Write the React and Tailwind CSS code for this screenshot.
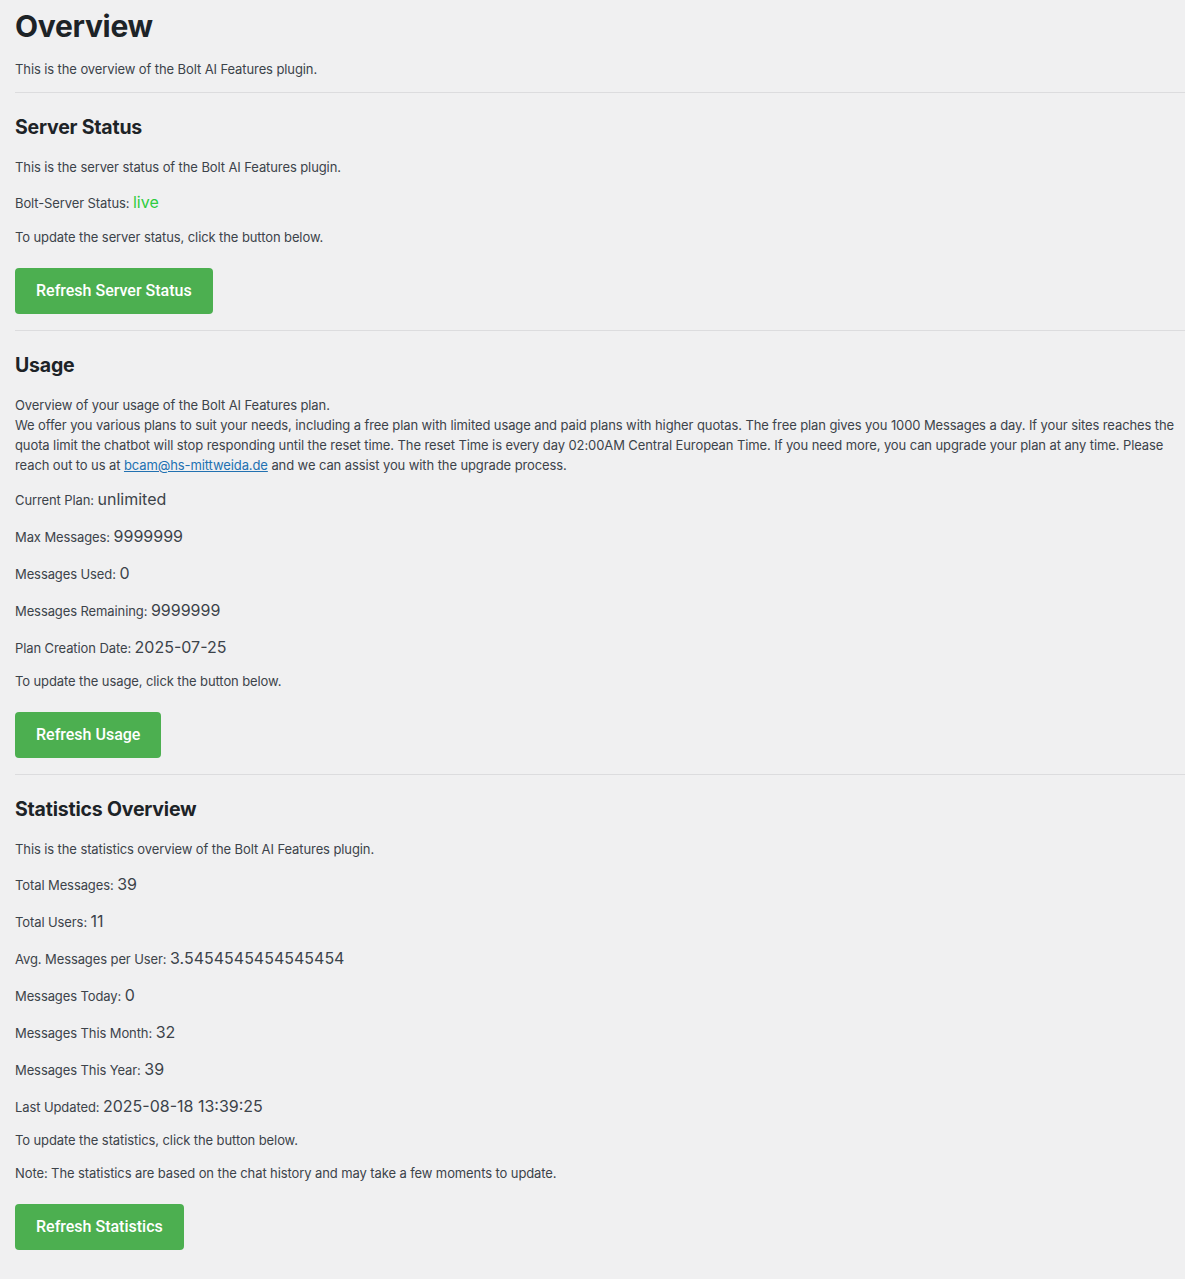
import React from "react";

const font = { fontFamily: "Inter, 'Noto Sans', sans-serif" };

function Hr() {
  return <div className="h-px bg-[#dcdcde] w-full" />;
}

function H2({ children }) {
  return (
    <h2 className="mt-[21px] text-[19.5px] leading-[26px] font-bold tracking-[-0.2px] text-[#1d2327]">
      {children}
    </h2>
  );
}

function P({ children, className = "mt-[13px]" }) {
  return (
    <p className={"text-[13px] tracking-[-0.1px] leading-[20px] text-[#3c434a] " + className}>
      {children}
    </p>
  );
}

function Item({ label, value, valueClass = "text-[#3c434a]", className = "mt-[13px]" }) {
  return (
    <p className={"h-[24px] flex items-center text-[13px] tracking-[-0.1px] leading-[20px] text-[#3c434a] " + className}>
      <span className="flex items-baseline">
        <span>{label}:&nbsp;</span>
        <span className={"text-[16px] leading-[20px] tracking-normal " + valueClass}>{value}</span>
      </span>
    </p>
  );
}

function Button({ children }) {
  return (
    <div className="mt-[21px] mb-[16px]">
      <button
        className="h-[46px] px-[21px] rounded-[4px] bg-[#4caf50] text-white text-[16px] font-medium"
        style={{ fontFamily: "Roboto, 'Noto Sans', sans-serif" }}
      >
        {children}
      </button>
    </div>
  );
}

export default function App() {
  return (
    <div className="min-h-[1279px] bg-[#f0f0f1] pl-[15px] pb-[20px]" style={font}>
      <h1 className="pt-[6px] text-[30px] leading-[40px] font-bold tracking-[-0.3px] text-[#1d2327]">
        Overview
      </h1>
      <P className="mt-[13px] mb-[13px]">This is the overview of the Bolt AI Features plugin.</P>
      <Hr />

      <H2>Server Status</H2>
      <P className="mt-[17px]">This is the server status of the Bolt AI Features plugin.</P>
      <Item label="Bolt-Server Status" value="live" valueClass="text-[#2ecc40]" />
      <P>To update the server status, click the button below.</P>
      <Button>Refresh Server Status</Button>
      <Hr />

      <H2>Usage</H2>
      <P className="mt-[17px]">
        Overview of your usage of the Bolt AI Features plan.
        <br />
        We offer you various plans to suit your needs, including a free plan with limited usage and
        paid plans with higher quotas. The free plan gives you 1000 Messages a day. If your sites
        reaches the quota limit the chatbot will stop responding until the reset time. The reset
        Time is every day 02:00AM Central European Time. If you need more, you can upgrade your
        plan at any time. Please reach out to us at{" "}
        <a href="#" className="text-[#2271b1] underline">
          bcam@hs-mittweida.de
        </a>{" "}
        and we can assist you with the upgrade process.
      </P>
      <Item label="Current Plan" value="unlimited" className="mt-[12px]" />
      <Item label="Max Messages" value="9999999" />
      <Item label="Messages Used" value="0" />
      <Item label="Messages Remaining" value="9999999" />
      <Item label="Plan Creation Date" value="2025-07-25" />
      <P className="mt-[12px]">To update the usage, click the button below.</P>
      <Button>Refresh Usage</Button>
      <Hr />

      <H2>Statistics Overview</H2>
      <P className="mt-[17px]">This is the statistics overview of the Bolt AI Features plugin.</P>
      <Item label="Total Messages" value="39" />
      <Item label="Total Users" value="11" />
      <Item label="Avg. Messages per User" value="3.5454545454545454" />
      <Item label="Messages Today" value="0" />
      <Item label="Messages This Month" value="32" />
      <Item label="Messages This Year" value="39" />
      <Item label="Last Updated" value="2025-08-18 13:39:25" />
      <P className="mt-[12px]">To update the statistics, click the button below.</P>
      <P>Note: The statistics are based on the chat history and may take a few moments to update.</P>
      <Button>Refresh Statistics</Button>
    </div>
  );
}
